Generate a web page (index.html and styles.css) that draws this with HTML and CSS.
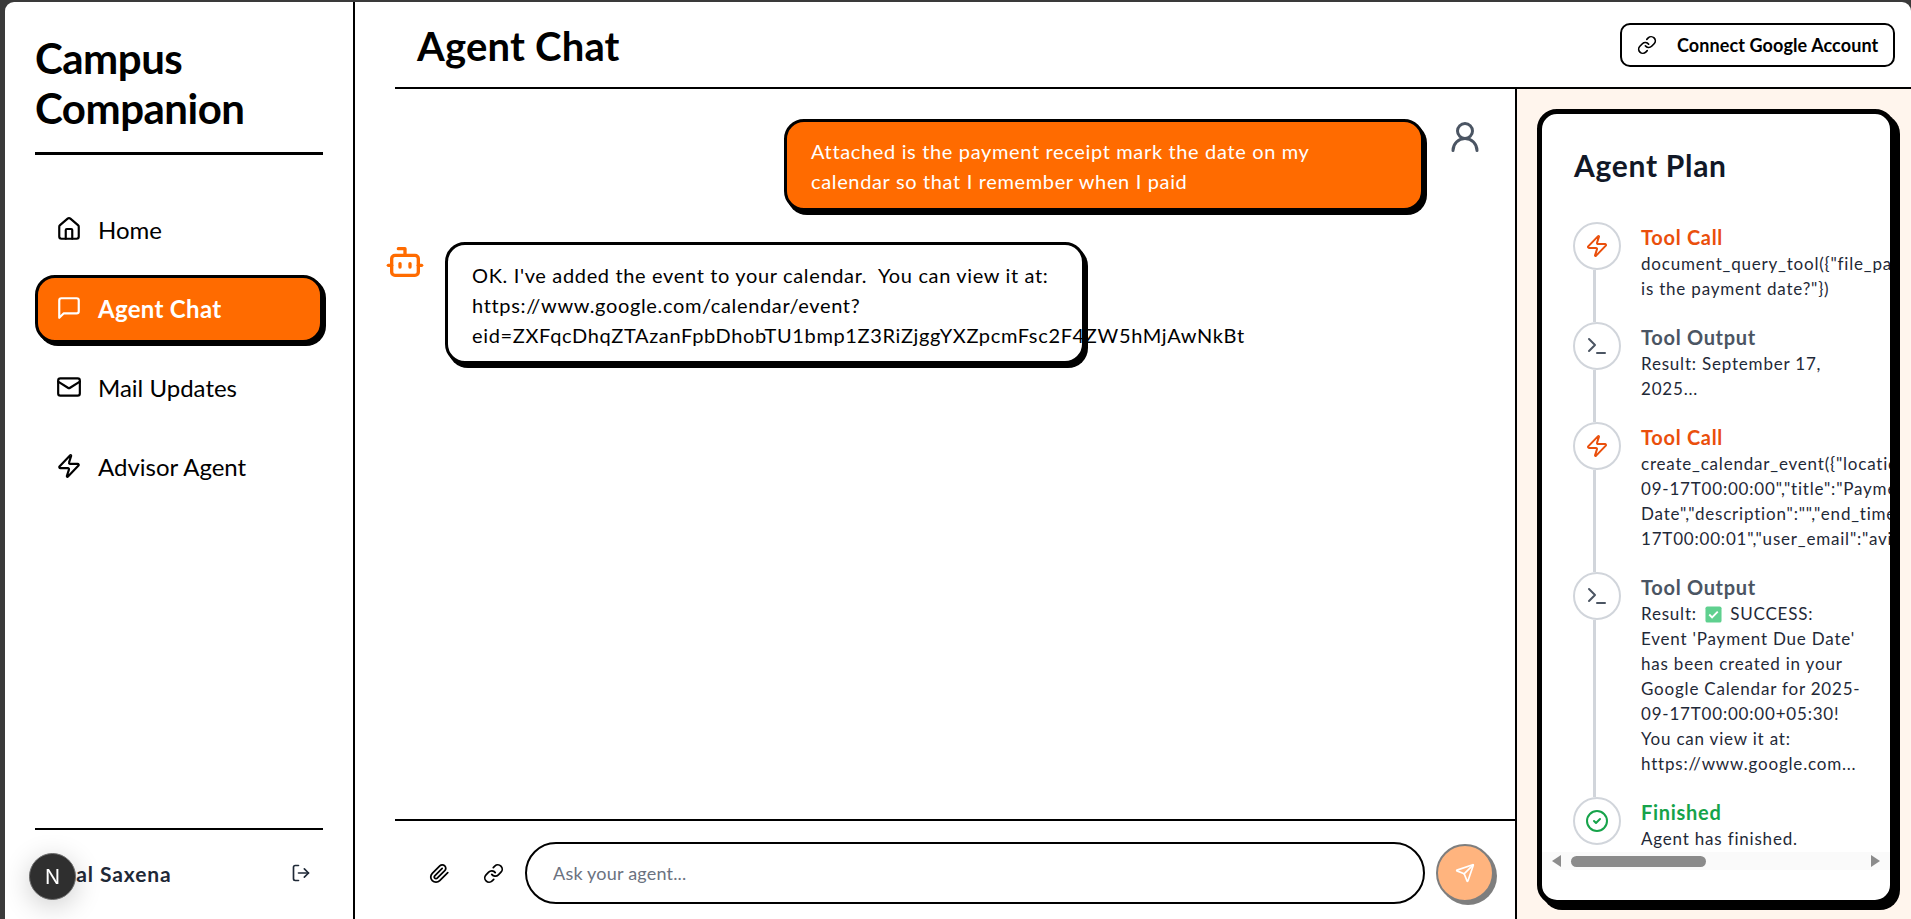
FILE: index.html
```html
<!DOCTYPE html>
<html>
<head>
  <meta charset="utf-8">
  <title>Campus Companion</title>
  <link rel="stylesheet" href="styles.css">
</head>
<body>
  <div class="app">
    <aside class="sidebar">
      <h1 class="brand">Campus<br>Companion</h1>
      <nav class="nav">
        <a class="nav-item">
          <svg class="icon" viewBox="0 0 24 24"><path d="M15 21v-8a1 1 0 0 0-1-1h-4a1 1 0 0 0-1 1v8"/><path d="M3 10a2 2 0 0 1 .709-1.528l7-5.999a2 2 0 0 1 2.582 0l7 5.999A2 2 0 0 1 21 10v9a2 2 0 0 1-2 2H5a2 2 0 0 1-2-2z"/></svg>
          Home
        </a>
        <a class="nav-item active">
          <svg class="icon" viewBox="0 0 24 24"><path d="M21 15a2 2 0 0 1-2 2H7l-4 4V5a2 2 0 0 1 2-2h14a2 2 0 0 1 2 2z"/></svg>
          Agent Chat
        </a>
        <a class="nav-item">
          <svg class="icon" viewBox="0 0 24 24"><rect width="20" height="16" x="2" y="4" rx="2"/><path d="m22 7-8.97 5.7a1.94 1.94 0 0 1-2.06 0L2 7"/></svg>
          Mail Updates
        </a>
        <a class="nav-item">
          <svg class="icon" viewBox="0 0 24 24"><path d="M4 14a1 1 0 0 1-.78-1.63l9.9-10.2a.5.5 0 0 1 .86.46l-1.92 6.02A1 1 0 0 0 13 10h7a1 1 0 0 1 .78 1.63l-9.9 10.2a.5.5 0 0 1-.86-.46l1.92-6.02A1 1 0 0 0 11 14z"/></svg>
          Advisor Agent
        </a>
      </nav>
      <div class="side-foot">
        <span class="user-name">Kunal Saxena</span>
        <svg class="icon logout" viewBox="0 0 24 24"><path d="M9 21H5a2 2 0 0 1-2-2V5a2 2 0 0 1 2-2h4"/><path d="m16 17 5-5-5-5"/><path d="M21 12H9"/></svg>
      </div>
    </aside>

    <main class="main">
      <header class="topbar">
        <h2 class="page-title">Agent Chat</h2>
        <button class="connect-btn">
          <svg class="icon" viewBox="0 0 24 24"><path d="M10 13a5 5 0 0 0 7.54.54l3-3a5 5 0 0 0-7.07-7.07l-1.72 1.71"/><path d="M14 11a5 5 0 0 0-7.54-.54l-3 3a5 5 0 0 0 7.07 7.07l1.71-1.71"/></svg>
          <span>Connect Google Account</span>
        </button>
      </header>

      <div class="workspace">
        <section class="chat">
          <div class="messages">
            <div class="msg msg-user">
              <div class="bubble bubble-user">Attached is the payment receipt mark the date on my<br>calendar so that I remember when I paid</div>
              <svg class="icon user-icon" viewBox="0 0 24 24"><circle cx="12" cy="8" r="5"/><path d="M20 21a8 8 0 0 0-16 0"/></svg>
            </div>
            <div class="msg msg-bot">
              <svg class="icon bot-icon" viewBox="0 0 24 24"><path d="M12 8V4H8"/><rect width="16" height="12" x="4" y="8" rx="2"/><path d="M2 14h2"/><path d="M20 14h2"/><path d="M15 13v2"/><path d="M9 13v2"/></svg>
              <div class="bubble bubble-bot">OK. I've added the event to your calendar.&nbsp; You can view it at:<br>https://www.google.com/calendar/event?<br><span class="long-link">eid=ZXFqcDhqZTAzanFpbDhobTU1bmp1Z3RiZjggYXZpcmFsc2F4ZW5hMjAwNkBt</span></div>
            </div>
          </div>
          <div class="composer">
            <button class="tool-btn">
              <svg class="icon" viewBox="0 0 24 24"><path d="m21.44 11.05-9.19 9.19a6 6 0 0 1-8.49-8.49l8.57-8.57A4 4 0 1 1 18 8.84l-8.59 8.57a2 2 0 0 1-2.83-2.83l8.49-8.48"/></svg>
            </button>
            <button class="tool-btn">
              <svg class="icon" viewBox="0 0 24 24"><path d="M10 13a5 5 0 0 0 7.54.54l3-3a5 5 0 0 0-7.07-7.07l-1.72 1.71"/><path d="M14 11a5 5 0 0 0-7.54-.54l-3 3a5 5 0 0 0 7.07 7.07l1.71-1.71"/></svg>
            </button>
            <input class="ask-input" type="text" placeholder="Ask your agent...">
            <button class="send-btn">
              <svg class="icon" viewBox="0 0 24 24"><path d="M14.536 21.686a.5.5 0 0 0 .937-.024l6.5-19a.496.496 0 0 0-.635-.635l-19 6.5a.5.5 0 0 0-.024.937l7.93 3.18a2 2 0 0 1 1.112 1.11z"/><path d="m21.854 2.147-10.94 10.939"/></svg>
            </button>
          </div>
        </section>

        <aside class="plan-wrap">
          <div class="plan-card">
            <h3 class="plan-title">Agent Plan</h3>
            <div class="plan-list">
              <div class="step">
                <div class="step-dot call"><svg class="icon" viewBox="0 0 24 24"><path d="M4 14a1 1 0 0 1-.78-1.63l9.9-10.2a.5.5 0 0 1 .86.46l-1.92 6.02A1 1 0 0 0 13 10h7a1 1 0 0 1 .78 1.63l-9.9 10.2a.5.5 0 0 1-.86-.46l1.92-6.02A1 1 0 0 0 11 14z"/></svg></div>
                <div class="step-body">
                  <div class="step-name call">Tool Call</div>
                  <div class="step-text">document_query_tool({"file_path":"receipt.pdf","query":"What<br>is the payment date?"})</div>
                </div>
              </div>
              <div class="step">
                <div class="step-dot output"><svg class="icon" viewBox="0 0 24 24"><path d="m4 17 6-6-6-6"/><path d="M12 19h8"/></svg></div>
                <div class="step-body">
                  <div class="step-name output">Tool Output</div>
                  <div class="step-text">Result: September 17,<br>2025...</div>
                </div>
              </div>
              <div class="step">
                <div class="step-dot call"><svg class="icon" viewBox="0 0 24 24"><path d="M4 14a1 1 0 0 1-.78-1.63l9.9-10.2a.5.5 0 0 1 .86.46l-1.92 6.02A1 1 0 0 0 13 10h7a1 1 0 0 1 .78 1.63l-9.9 10.2a.5.5 0 0 1-.86-.46l1.92-6.02A1 1 0 0 0 11 14z"/></svg></div>
                <div class="step-body">
                  <div class="step-name call">Tool Call</div>
                  <div class="step-text">create_calendar_event({"location":"","start_time":"2025-<br>09-17T00:00:00","title":"Payment Due<br>Date","description":"","end_time":"2025-09-<br>17T00:00:01","user_email":"aviral"})</div>
                </div>
              </div>
              <div class="step">
                <div class="step-dot output"><svg class="icon" viewBox="0 0 24 24"><path d="m4 17 6-6-6-6"/><path d="M12 19h8"/></svg></div>
                <div class="step-body">
                  <div class="step-name output">Tool Output</div>
                  <div class="step-text">Result: <svg class="tick" viewBox="0 0 18 18"><rect width="17" height="17" x=".5" y=".5" rx="2"/><path d="m4.5 9 3 3 6-6"/></svg> SUCCESS:<br>Event 'Payment Due Date'<br>has been created in your<br>Google Calendar for 2025-<br>09-17T00:00:00+05:30!<br>You can view it at:<br>https://www.google.com...</div>
                </div>
              </div>
              <div class="step">
                <div class="step-dot done"><svg class="icon" viewBox="0 0 24 24"><circle cx="12" cy="12" r="10"/><path d="m9 12 2 2 4-4"/></svg></div>
                <div class="step-body">
                  <div class="step-name done">Finished</div>
                  <div class="step-text">Agent has finished.</div>
                </div>
              </div>
            </div>
            <div class="fake-scroll">
              <span class="arrow arrow-left"></span>
              <div class="scroll-track"><span class="scroll-thumb"></span></div>
              <span class="arrow arrow-right"></span>
            </div>
          </div>
        </aside>
      </div>
    </main>
  </div>

  <div class="next-badge">N</div>
</body>
</html>
```

FILE: styles.css
```css
* {
  box-sizing: border-box;
}

html, body {
  height: 100%;
}

body {
  margin: 0;
  padding: 2px 0 0 5px;
  overflow: hidden;
  background-color: #3a3a3a;
  color: #000;
  font-family: "Lato", "Open Sans", sans-serif;
}

.icon {
  width: 24px;
  height: 24px;
  flex: none;
  fill: none;
  stroke: currentColor;
  stroke-width: 2;
  stroke-linecap: round;
  stroke-linejoin: round;
}

.app {
  display: flex;
  height: 917px;
  background: #fff;
  border-radius: 9px 9px 0 0;
  overflow: hidden;
}

/* sidebar */
.sidebar {
  width: 350px;
  flex: none;
  display: flex;
  flex-direction: column;
  padding: 0 30px;
  border-right: 2px solid #000;
}

.brand {
  margin: 31px 0 0;
  padding-bottom: 19px;
  border-bottom: 3px solid #000;
  font-size: 42px;
  line-height: 50px;
  font-weight: 700;
  letter-spacing: -0.5px;
}

.nav {
  display: flex;
  flex-direction: column;
  gap: 11px;
  margin-top: 41px;
}

.nav-item {
  display: flex;
  align-items: center;
  gap: 16px;
  height: 68px;
  padding: 0 0 2px 18px;
  border: 3px solid transparent;
  border-radius: 20px;
  font-size: 24px;
}

.nav-item .icon {
  width: 26px;
  height: 26px;
}

.nav-item.active {
  background: #ff6b00;
  border-color: #000;
  box-shadow: 3px 3px 0 #000;
  color: #fff;
  font-weight: 700;
  letter-spacing: 0.3px;
}

.side-foot {
  display: flex;
  align-items: center;
  justify-content: space-between;
  margin-top: auto;
  height: 91px;
  padding: 0 12px 2px 1px;
  border-top: 2px solid #000;
}

.user-name {
  font-size: 21px;
  font-weight: 700;
  letter-spacing: 0.9px;
  color: #1f2937;
}

.logout {
  width: 20px;
  height: 20px;
  margin-bottom: 2px;
  color: #1f2937;
}

/* main */
.main {
  flex: 1;
  min-width: 0;
  display: flex;
  flex-direction: column;
}

.topbar {
  display: flex;
  align-items: center;
  justify-content: space-between;
  flex: none;
  height: 87px;
  margin-left: 40px;
  padding: 0 16px 0 22px;
  border-bottom: 2px solid #000;
}

.page-title {
  margin: 3px 0 0;
  font-size: 40px;
  font-weight: 700;
  letter-spacing: 0.2px;
}

.connect-btn {
  display: flex;
  align-items: center;
  gap: 20px;
  width: 275px;
  height: 44px;
  padding: 0 15px;
  background: #fff;
  border: 2px solid #000;
  border-radius: 10px;
  font-family: inherit;
  font-size: 18px;
  font-weight: 700;
  letter-spacing: 0.1px;
  white-space: nowrap;
  color: #000;
}

.connect-btn .icon {
  width: 20px;
  height: 20px;
}

.workspace {
  flex: 1;
  min-height: 0;
  display: flex;
}

/* chat */
.chat {
  width: 1162px;
  flex: none;
  display: flex;
  flex-direction: column;
  border-right: 2px solid #000;
}

.messages {
  flex: 1;
  display: flex;
  flex-direction: column;
  gap: 31px;
  padding: 30px 32px 0 30px;
}

.msg {
  display: flex;
  align-items: flex-start;
}

.msg-user {
  justify-content: flex-end;
  gap: 23px;
}

.msg-bot {
  gap: 20px;
}

.bubble {
  width: 640px;
  padding: 15px 24px 11px;
  border: 3px solid #000;
  border-radius: 20px;
  box-shadow: 3px 4px 0 #000;
  font-size: 20px;
  line-height: 30px;
  letter-spacing: 0.65px;
}

.bubble-user {
  padding: 14px 24px 12px;
  background: #ff6b00;
  color: #fff;
}

.bubble-bot {
  background: #fff;
  white-space: nowrap;
}

.user-icon {
  width: 36px;
  height: 36px;
  color: #4b5563;
}

.bot-icon {
  width: 40px;
  height: 40px;
  color: #ff6b00;
}

.composer {
  flex: none;
  display: flex;
  align-items: center;
  height: 100px;
  margin-left: 40px;
  padding: 6px 21px 0 24px;
  border-top: 2px solid #000;
}

.tool-btn {
  display: flex;
  align-items: center;
  justify-content: center;
  flex: none;
  width: 40px;
  height: 40px;
  margin-right: 14px;
  padding: 0;
  background: none;
  border: none;
  color: #000;
}

.tool-btn .icon {
  width: 21px;
  height: 21px;
}

.ask-input {
  flex: 1;
  min-width: 0;
  height: 62px;
  margin-left: -2px;
  padding: 0 26px;
  border: 2px solid #000;
  border-radius: 31px;
  font-family: inherit;
  font-size: 18px;
  letter-spacing: 0.2px;
}

.ask-input::placeholder {
  color: #6b7280;
}

.send-btn {
  display: flex;
  align-items: center;
  justify-content: center;
  flex: none;
  width: 58px;
  height: 58px;
  margin-left: 11px;
  padding: 0;
  background: #ff6b00;
  border: 2px solid #000;
  border-radius: 50%;
  box-shadow: 3px 3px 0 #000;
  color: #fff;
  opacity: 0.5;
}

.send-btn .icon {
  width: 20px;
  height: 20px;
}

/* agent plan */
.plan-wrap {
  flex: 1;
  min-width: 0;
  padding: 20px 16px 14px 20px;
  background: #fff5ed;
}

.plan-card {
  display: flex;
  flex-direction: column;
  height: 796px;
  padding-bottom: 30px;
  background: #fff;
  border: 5px solid #000;
  border-radius: 20px;
  box-shadow: 5px 5px 0 #000;
  overflow: hidden;
}

.plan-title {
  flex: none;
  margin: 32px 0 0 32px;
  font-size: 30px;
  line-height: 38px;
  font-weight: 700;
  letter-spacing: 0.7px;
  color: #111827;
}

.plan-list {
  flex: 1;
  min-height: 0;
  display: flex;
  flex-direction: column;
  margin-top: 38px;
  padding-left: 31px;
  overflow: hidden;
}

.step {
  position: relative;
  display: flex;
  gap: 20px;
  padding-bottom: 21px;
  flex: none;
}

.step:not(:last-child)::before {
  content: "";
  position: absolute;
  left: 20px;
  top: 48px;
  bottom: 0;
  width: 3px;
  background: #d1d5db;
}

.step-dot {
  display: flex;
  align-items: center;
  justify-content: center;
  flex: none;
  width: 48px;
  height: 48px;
  border: 2px solid #d1d5db;
  border-radius: 50%;
  background: #fff;
}

.step-body {
  padding-top: 1px;
  white-space: nowrap;
}

.step-name {
  font-size: 20px;
  line-height: 28px;
  font-weight: 700;
  letter-spacing: 0.7px;
}

.step-text {
  font-size: 17px;
  line-height: 25px;
  letter-spacing: 0.8px;
  color: #1f2937;
}

.call {
  color: #ea4f0c;
}

.output {
  color: #4b5563;
}

.done {
  color: #16a34a;
}

.tick {
  display: inline-block;
  width: 17px;
  height: 17px;
  margin: 0 3px;
  vertical-align: -3px;
}

.tick rect {
  fill: #5fd08f;
}

.tick path {
  fill: none;
  stroke: #fff;
  stroke-width: 2;
}

.fake-scroll {
  flex: none;
  display: flex;
  align-items: center;
  height: 18px;
  padding: 0 10px;
  background: #fafafa;
}

.arrow {
  flex: none;
  width: 0;
  height: 0;
  border-top: 6px solid transparent;
  border-bottom: 6px solid transparent;
}

.arrow-left {
  border-right: 9px solid #8b8b8b;
}

.arrow-right {
  border-left: 9px solid #8b8b8b;
}

.scroll-track {
  flex: 1;
  padding: 0 10px;
}

.scroll-thumb {
  display: block;
  width: 135px;
  height: 11px;
  border-radius: 6px;
  background: #8b8b8b;
}

.next-badge {
  position: fixed;
  left: 29px;
  bottom: 19px;
  width: 47px;
  height: 47px;
  display: flex;
  align-items: center;
  justify-content: center;
  border: 1px solid #6a6a6a;
  border-radius: 50%;
  background: #2f2f2f;
  box-shadow: 0 6px 28px rgba(0, 0, 0, 0.2);
  color: #fff;
  font-family: "Inter", sans-serif;
  font-size: 20px;
}
```
